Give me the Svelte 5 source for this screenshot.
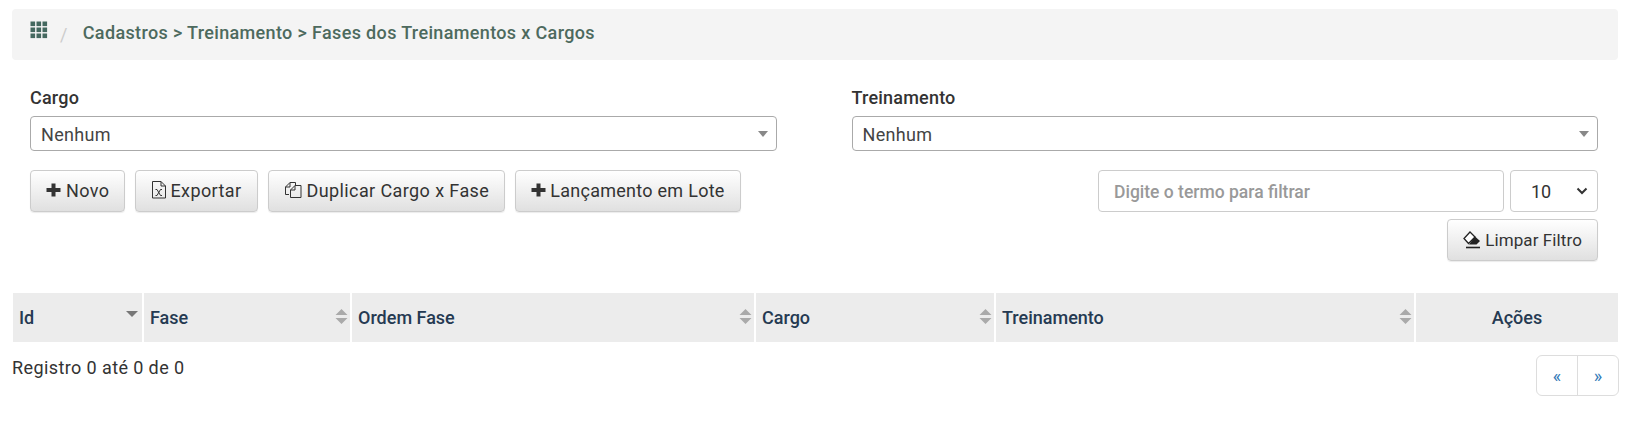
<script lang="ts">
  const columns = [
    { label: "Id", width: 130, sort: "desc" },
    { label: "Fase", width: 208, sort: "both" },
    { label: "Ordem Fase", width: 404, sort: "both" },
    { label: "Cargo", width: 240, sort: "both" },
    { label: "Treinamento", width: 420, sort: "both" },
    { label: "Ações", width: 203, sort: "" },
  ];
  const filters = ["Cargo", "Treinamento"];
</script>

<div class="page">
  <nav class="crumbs">
    <svg class="grid-icon" width="18" height="18" viewBox="0 0 18 18" aria-hidden="true">
      {#each [0, 6, 12] as y}
        {#each [0, 6, 12] as x}
          <rect x={x + 0.5} y={y + 0.5} width="4.6" height="4.6" />
        {/each}
      {/each}
    </svg>
    <span class="slash">/</span>
    <span class="crumb-text">Cadastros &gt; Treinamento &gt; Fases dos Treinamentos x Cargos</span>
  </nav>

  <div class="filters">
    {#each filters as name}
      <div class="filter">
        <span class="filter-label">{name}</span>
        <div class="combo">
          <span>Nenhum</span>
          <i class="combo-caret"></i>
        </div>
      </div>
    {/each}
  </div>

  <div class="toolbar">
    <div class="actions">
      <button class="btn">
        <svg width="15" height="14" viewBox="0 0 15 14" aria-hidden="true"><path d="M5.500 0.500h4v4.500H14.500v4H9.500v4.500h-4V9H0.500V5h5z" fill="#333" /></svg>
        Novo
      </button>
      <button class="btn btn-export">
        <svg width="16" height="18" viewBox="0 0 16 18" fill="none" stroke="#333" aria-hidden="true">
          <path d="M1.500 0.500h8.500l4.500 4.500v12h-13z" />
          <path d="M10 0.500v4.500h4.500" />
          <path d="M4.500 8.500h1.500l3.500 6h1.500M4.500 14.500h1.500l3.500-6h1.500" stroke-width="1" />
        </svg>
        Exportar
      </button>
      <button class="btn">
        <svg width="18" height="18" viewBox="0 0 18 18" fill="none" stroke="#333" aria-hidden="true">
          <path d="M5 13.500H1.500V6l4.500-4.500h5.500v3" />
          <path d="M6.500 16.500V9l4.500-4.500h6v12z" />
          <path d="M11 4.500V9H6.500M6 1.500V6H1.500" />
        </svg>
        Duplicar Cargo x Fase
      </button>
      <button class="btn btn-batch">
        <svg width="15" height="14" viewBox="0 0 15 14" aria-hidden="true"><path d="M5.500 0.500h4v4.500H14.500v4H9.500v4.500h-4V9H0.500V5h5z" fill="#333" /></svg>
        Lançamento em Lote
      </button>
    </div>
    <div class="search">
      <div class="search-row">
        <input class="search-input" type="text" placeholder="Digite o termo para filtrar" />
        <select class="page-size">
          <option>10</option>
        </select>
      </div>
      <button class="btn btn-clear">
        <svg width="18" height="18" viewBox="0 0 18 18" aria-hidden="true">
          <path d="M7 1L1 7.500l4.500 5L12 6z" fill="#fff" stroke="#222" stroke-width="1.300" />
          <path d="M12 5.500l5 4.500-3.500 3.500H6z" fill="#222" />
          <path d="M3 16.500h14" stroke="#222" stroke-width="1.600" />
        </svg>
        Limpar Filtro
      </button>
    </div>
  </div>

  <table class="grid">
    <thead>
      <tr>
        {#each columns as col}
          <th style="width: {col.width}px" class:center={col.label === "Ações"}>
            {col.label}
            {#if col.sort === "desc"}
              <svg class="sort sort-desc" width="14" height="8" viewBox="0 0 14 8" aria-hidden="true"><path d="M1 1h12L7 7z" /></svg>
            {:else if col.sort === "both"}
              <svg class="sort" width="13" height="17" viewBox="0 0 13 17" aria-hidden="true"><path d="M0.500 7L6.500 1l6 6zM0.500 10h12l-6 6z" /></svg>
            {/if}
          </th>
        {/each}
      </tr>
    </thead>
  </table>

  <div class="footer">
    <span class="count">Registro 0 até 0 de 0</span>
    <div class="pager">
      <a href="#prev">«</a>
      <a href="#next">»</a>
    </div>
  </div>
</div>

<style>
  :global(body) {
    margin: 0;
    background: #fff;
  }

  .page {
    padding: 9px 11px 0 12px;
    font-family: Roboto, "Liberation Sans", sans-serif;
    font-size: 18px;
    color: #333;
    letter-spacing: 0.3px;
  }

  .crumbs {
    display: flex;
    align-items: center;
    height: 51px;
    padding: 0 18px;
    background: #f4f4f4;
    border-radius: 4px;
    color: #4d6a5e;
  }

  .grid-icon {
    fill: #44685f;
    margin-top: -9px;
  }

  .slash {
    margin: 0 15px 0 12px;
    color: #ccc;
  }

  .crumb-text {
    margin-top: -4px;
    font-weight: 500;
    letter-spacing: 0.35px;
  }

  .filters {
    display: flex;
    gap: 75px;
    margin: 28px 20px 0 18px;
  }

  .filter {
    flex: 1;
  }

  .filter-label {
    display: block;
    font-weight: 500;
    letter-spacing: 0.2px;
    line-height: 20px;
    margin-bottom: 8px;
  }

  .combo {
    position: relative;
    height: 33px;
    line-height: 35px;
    padding-left: 10px;
    border: 1px solid #aaa;
    border-radius: 4px;
    color: #444;
  }

  .combo-caret {
    position: absolute;
    right: 8px;
    top: 14px;
    border: solid transparent;
    border-width: 6px 5px 0;
    border-top-color: #888;
  }

  .toolbar {
    display: flex;
    justify-content: space-between;
    align-items: flex-start;
    margin: 19px 20px 0 18px;
  }

  .actions {
    display: flex;
    gap: 10px;
  }

  .btn {
    display: inline-flex;
    align-items: center;
    gap: 5px;
    height: 42px;
    padding: 0 15px 2px;
    border: 1px solid #ccc;
    border-radius: 4px;
    background: linear-gradient(#fff, #e0e0e0);
    box-shadow: 0 1px 1px rgba(0, 0, 0, 0.08);
    font: inherit;
    letter-spacing: 0.4px;
    color: #333;
  }

  .btn-export {
    gap: 3px;
  }

  .btn-batch {
    gap: 4px;
    letter-spacing: 0.27px;
  }

  .btn-clear {
    padding: 0 15px;
    font-size: 17px;
    letter-spacing: 0.1px;
    gap: 4px;
  }

  .search {
    display: flex;
    flex-direction: column;
    align-items: flex-end;
    gap: 7px;
  }

  .search-row {
    display: flex;
    gap: 6px;
  }

  .search-input {
    width: 406px;
    height: 42px;
    box-sizing: border-box;
    padding: 1px 15px 0;
    border: 1px solid #ccc;
    border-radius: 4px;
    font: inherit;
    font-size: 17.5px;
    font-weight: 500;
    letter-spacing: 0;
    color: #333;
  }

  .search-input::placeholder {
    color: #999;
  }

  .page-size {
    width: 88px;
    height: 42px;
    box-sizing: border-box;
    padding: 0 0 0 20px;
    border: 1px solid #ccc;
    border-radius: 4px;
    appearance: none;
    background: #fff url("data:image/svg+xml,%3Csvg xmlns='http://www.w3.org/2000/svg' width='12' height='8'%3E%3Cpath d='M1.500 1.500L6 6l4.500-4.500' fill='none' stroke='%23333' stroke-width='2'/%3E%3C/svg%3E") no-repeat right 9px center;
    font: inherit;
    color: #333;
  }

  .grid {
    width: 1605px;
    margin: 32px 0 0 1px;
    border-collapse: collapse;
    table-layout: fixed;
  }

  .grid th {
    position: relative;
    height: 49px;
    padding: 0 6px;
    box-sizing: border-box;
    background: #ececec;
    border-right: 2px solid #fff;
    text-align: left;
    font-weight: 500;
    letter-spacing: 0;
    color: #253a52;
  }

  .grid th:last-child {
    border-right: 0;
  }

  .grid th.center {
    text-align: center;
  }

  .sort {
    position: absolute;
    right: 2px;
    top: 15px;
    fill: #aaa;
  }

  .sort-desc {
    top: 17px;
    right: 3px;
    fill: #777;
  }

  .footer {
    display: flex;
    justify-content: space-between;
    align-items: flex-start;
    margin-right: -1px;
    padding-top: 13px;
  }

  .count {
    line-height: 20px;
    margin-top: 3px;
    letter-spacing: 0.4px;
  }

  .pager {
    display: flex;
    height: 41px;
    border: 1px solid #ddd;
    border-radius: 6px;
    box-sizing: border-box;
  }

  .pager a {
    display: flex;
    align-items: center;
    justify-content: center;
    width: 40px;
    color: #337ab7;
    text-decoration: none;
    font-size: 18px;
  }

  .pager a + a {
    border-left: 1px solid #ddd;
  }
</style>
